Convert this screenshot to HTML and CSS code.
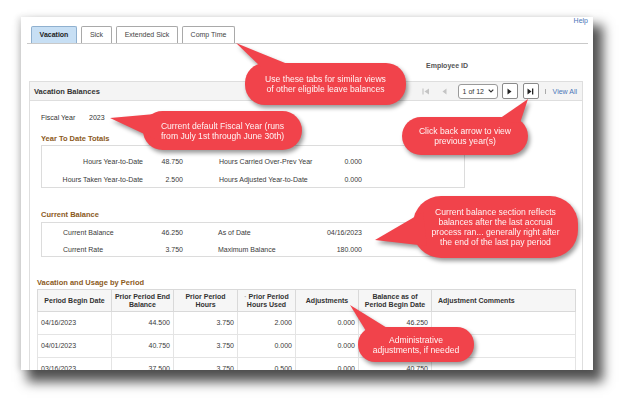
FILE: index.html
```html
<!DOCTYPE html>
<html>
<head>
<meta charset="utf-8">
<link rel="stylesheet" href="styles.css">
</head>
<body>
<div class="page">
  <div class="frame">
    <div class="topbar"><a class="help">Help</a></div>
    <div class="tabs">
      <div class="tab tab-active">Vacation</div>
      <div class="tab tab-sick">Sick</div>
      <div class="tab tab-ext">Extended Sick</div>
      <div class="tab tab-comp">Comp Time</div>
    </div>
    <div class="emp">Employee ID</div>
    <section class="balances">
      <div class="bal-head">
        <div class="bal-title">Vacation Balances</div>
        <div class="pager">
          <svg class="pg-first" width="8" height="7" viewBox="0 0 8 7"><rect x="0.5" y="0.5" width="1" height="6" fill="#bbb"/><polygon points="7,0.5 2.5,3.5 7,6.5" fill="#c4c4c4"/></svg>
          <svg class="pg-prev" width="5" height="7" viewBox="0 0 5 7"><polygon points="4.5,0.5 0.5,3.5 4.5,6.5" fill="#c4c4c4"/></svg>
          <div class="pg-select">1 of 12<svg class="chev" width="6" height="4" viewBox="0 0 6 4"><polyline points="0.7,0.7 3,3 5.3,0.7" fill="none" stroke="#333" stroke-width="1.2"/></svg></div>
          <div class="pg-btn"><svg width="5" height="7" viewBox="0 0 5 7"><polygon points="0.5,0.5 4.5,3.5 0.5,6.5" fill="#222"/></svg></div>
          <div class="pg-btn pg-btn2"><svg width="7" height="7" viewBox="0 0 7 7"><polygon points="0.5,0.5 4.5,3.5 0.5,6.5" fill="#222"/><rect x="5" y="0.5" width="1.3" height="6" fill="#222"/></svg></div>
          <span class="pg-sep"></span>
          <a class="pg-all">View All</a>
        </div>
      </div>
      <div class="bal-body">
        <div class="fiscal"><span class="fy-label">Fiscal Year</span><span>2023</span></div>
        <h3 class="sec-h sec-ytd">Year To Date Totals</h3>
        <div class="box box-ytd">
          <div class="lab-r">Hours Year-to-Date</div><div class="num">48.750</div><div class="lab2">Hours Carried Over-Prev Year</div><div class="num">0.000</div>
          <div class="lab-r">Hours Taken Year-to-Date</div><div class="num">2.500</div><div class="lab2">Hours Adjusted Year-to-Date</div><div class="num">0.000</div>
        </div>
        <h3 class="sec-h sec-cur">Current Balance</h3>
        <div class="box box-cur">
          <div class="lab-l">Current Balance</div><div class="num">46.250</div><div class="lab2">As of Date</div><div class="num">04/16/2023</div>
          <div class="lab-l">Current Rate</div><div class="num">3.750</div><div class="lab2">Maximum Balance</div><div class="num">180.000</div>
        </div>
        <h3 class="sec-h sec-usage">Vacation and Usage by Period</h3>
        <table class="usage">
          <colgroup>
            <col class="c1"><col class="c2"><col class="c3"><col class="c4"><col class="c5"><col class="c6"><col class="c7">
          </colgroup>
          <thead>
            <tr>
              <th>Period Begin Date</th>
              <th>Prior Period End<br>Balance</th>
              <th>Prior Period<br>Hours</th>
              <th><span class="dot">·</span> Prior Period<br>Hours Used</th>
              <th>Adjustments</th>
              <th>Balance as of<br>Period Begin Date</th>
              <th class="th-left">Adjustment Comments</th>
            </tr>
          </thead>
          <tbody>
            <tr><td class="tl">04/16/2023</td><td>44.500</td><td>3.750</td><td>2.000</td><td>0.000</td><td>46.250</td><td></td></tr>
            <tr><td class="tl">04/01/2023</td><td>40.750</td><td>3.750</td><td>0.000</td><td>0.000</td><td>44.500</td><td></td></tr>
            <tr><td class="tl">03/16/2023</td><td>37.500</td><td>3.750</td><td>0.500</td><td>0.000</td><td>40.750</td><td></td></tr>
          </tbody>
        </table>
      </div>
    </section>
  </div>

  <div class="callout co-tabs">
    <svg class="tail" width="1" height="1"><polygon points="-9,-20 16,4 50,4"/></svg>
    <span>Use these tabs for similar views<br>of other eligible leave balances</span>
  </div>
  <div class="callout co-fiscal">
    <svg class="tail" width="1" height="1"><polygon points="-33,7 12,3 12,28"/></svg>
    <span>Current default Fiscal Year (runs<br>from July 1st through June 30th)</span>
  </div>
  <div class="callout co-back">
    <svg class="tail" width="1" height="1"><polygon points="126,-18 94,4 118,6"/></svg>
    <span>Click back arrow to view<br>previous year(s)</span>
  </div>
  <div class="callout co-current">
    <svg class="tail" width="1" height="1"><polygon points="-38,44 10,16 14,50"/></svg>
    <span>Current balance section reflects<br>balances after the last accrual<br>process ran... generally right after<br>the end of the last pay period</span>
  </div>
  <div class="callout co-adj">
    <svg class="tail" width="1" height="1"><polygon points="-8,-22 8,4 34,4"/></svg>
    <span>Administrative<br>adjustments, if needed</span>
  </div>
</div>
</body>
</html>
```

FILE: styles.css
```css
html, body {
  margin: 0;
  padding: 0;
  background: #fff;
}

.page {
  position: relative;
  width: 635px;
  height: 411px;
  overflow: hidden;
  background: #fff;
  padding: 17px 0 0 21px;
  box-sizing: border-box;
  font-family: "Liberation Sans", Arial, sans-serif;
  font-size: 7px;
  color: #333;
}

.frame {
  width: 572px;
  height: 353px;
  background: #fff;
  overflow: hidden;
  box-shadow: 8px 10px 11px 2px rgba(0, 0, 0, 0.68), -3px 0 6px rgba(0, 0, 0, 0.12);
}

/* top bar */
.topbar {
  height: 9px;
  display: flex;
  justify-content: flex-end;
  padding-right: 5px;
}
.help {
  color: #4a76b8;
  font-size: 7px;
  line-height: 7px;
}

/* tabs */
.tabs {
  display: flex;
  gap: 4px;
  margin: 0 5px 0 6px;
  padding-left: 4px;
  border-bottom: 1px solid #c9c9c9;
  height: 17px;
}
.tab {
  height: 17px;
  box-sizing: border-box;
  border: 1px solid #a9a9a9;
  border-bottom: none;
  border-radius: 2px 2px 0 0;
  background: #fff;
  color: #444;
  font-size: 7px;
  line-height: 16px;
  text-align: center;
}
.tab-active {
  width: 46px;
  background: #c7dff4;
  border-color: #8fb0cf;
  font-weight: bold;
  color: #222;
}
.tab-sick { width: 31px; }
.tab-ext { width: 62px; }
.tab-comp { width: 53px; }

.emp {
  margin-top: 18px;
  padding-left: 405px;
  line-height: 8px;
  font-weight: bold;
  color: #555;
}

/* balances section */
.balances {
  margin: 11px 0 0 8px;
  width: 554px;
}
.bal-head {
  height: 20px;
  box-sizing: border-box;
  background: #f4f4f4;
  border: 1px solid #dedede;
  display: flex;
  align-items: center;
  justify-content: space-between;
  padding: 0 5px 0 4px;
}
.bal-title {
  font-weight: bold;
  font-size: 7.5px;
  color: #333;
}
.pager {
  display: flex;
  align-items: center;
}
.pager svg { display: block; }
.pg-first { margin-right: 12px; }
.pg-prev { margin-right: 11px; }
.pg-select {
  width: 40px;
  height: 15px;
  box-sizing: border-box;
  border: 1px solid #9a9a9a;
  border-radius: 3px;
  background: #fff;
  display: flex;
  align-items: center;
  justify-content: space-between;
  padding: 0 3px 0 4px;
  color: #333;
  font-size: 7px;
}
.pg-btn {
  width: 16px;
  height: 16px;
  box-sizing: border-box;
  border: 1px solid #8a8a8a;
  border-radius: 2px;
  background: #fff;
  display: flex;
  align-items: center;
  justify-content: center;
  margin-left: 4px;
}
.pg-btn2 { margin-left: 5px; }
.pg-sep {
  width: 1px;
  height: 5px;
  background: #aaa;
  margin: 0 7px 0 6px;
}
.pg-all {
  color: #4a76b8;
  font-size: 7px;
}

.bal-body {
  border-left: 1px solid #dedede;
  border-right: 1px solid #dedede;
  height: 300px;
}

.fiscal {
  padding: 13px 0 0 11px;
  line-height: 8px;
  display: flex;
  color: #333;
}
.fy-label { width: 48px; }

.sec-h {
  margin: 0;
  font-size: 7.5px;
  line-height: 8px;
  font-weight: bold;
  color: #8b5a1c;
}
.sec-ytd { margin: 13px 0 2px 11px; }
.sec-cur { margin: 23px 0 3px 11px; }
.sec-usage { margin: 22px 0 2px 7px; }

.box {
  margin-left: 11px;
  width: 424px;
  box-sizing: border-box;
  border: 1px solid #dcdcdc;
  display: grid;
  grid-template-columns: 101px 40px 107px 72px;
  line-height: 8px;
  color: #3a3a3a;
}
.box-ytd {
  height: 43px;
  padding-top: 12px;
  row-gap: 7px;
}
.box-cur {
  height: 35px;
  padding: 6px 0 0 21px;
  row-gap: 6px;
  grid-template-columns: 80px 40px 107px 72px;
}
.lab-r { text-align: right; }
.lab-l { text-align: left; }
.lab2 { padding-left: 36px; white-space: nowrap; }
.box-cur .lab2 { padding-left: 35px; }
.num { text-align: right; color: #3a3a3a; }

/* usage table */
.usage {
  margin-left: 7px;
  width: 538px;
  border-collapse: collapse;
  table-layout: fixed;
  font-size: 7px;
  color: #3a3a3a;
}
.c1 { width: 74px; }
.c2 { width: 62px; }
.c3 { width: 64px; }
.c4 { width: 58px; }
.c5 { width: 63px; }
.c6 { width: 73px; }
.c7 { width: 144px; }
.usage th {
  height: 22px;
  padding: 0 2px;
  box-sizing: border-box;
  background: #f6f6f6;
  border: 1px solid #d9d9d9;
  font-weight: bold;
  line-height: 8px;
  color: #333;
  text-align: center;
}
.usage th.th-left {
  text-align: left;
  padding-left: 6px;
}
.dot { color: #aaa; }
.usage td {
  height: 22px;
  padding: 0 3px;
  border: 1px solid #e4e4e4;
  text-align: right;
  line-height: 8px;
}
.usage td.tl { text-align: left; }

/* callouts */
.callout {
  position: absolute;
  box-sizing: border-box;
  background: #f1434b;
  color: #fff4f4;
  font-size: 8.6px;
  line-height: 10px;
  text-align: center;
  display: flex;
  align-items: center;
  justify-content: center;
  border-radius: 20px;
  white-space: nowrap;
  filter: drop-shadow(2px 3px 2px rgba(0, 0, 0, 0.4));
}
.callout span { position: relative; }
.tail {
  position: absolute;
  left: 0;
  top: 0;
  overflow: visible;
  fill: #f1434b;
}
.co-tabs { left: 245px; top: 63px; width: 161px; height: 42px; }
.co-fiscal { left: 143px; top: 111px; width: 159px; height: 39px; }
.co-back { left: 402px; top: 117px; width: 126px; height: 38px; }
.co-current { left: 413px; top: 196px; width: 165px; height: 62px; border-radius: 28px; }
.co-adj { left: 358px; top: 327px; width: 116px; height: 35px; border-radius: 17px; }
```
